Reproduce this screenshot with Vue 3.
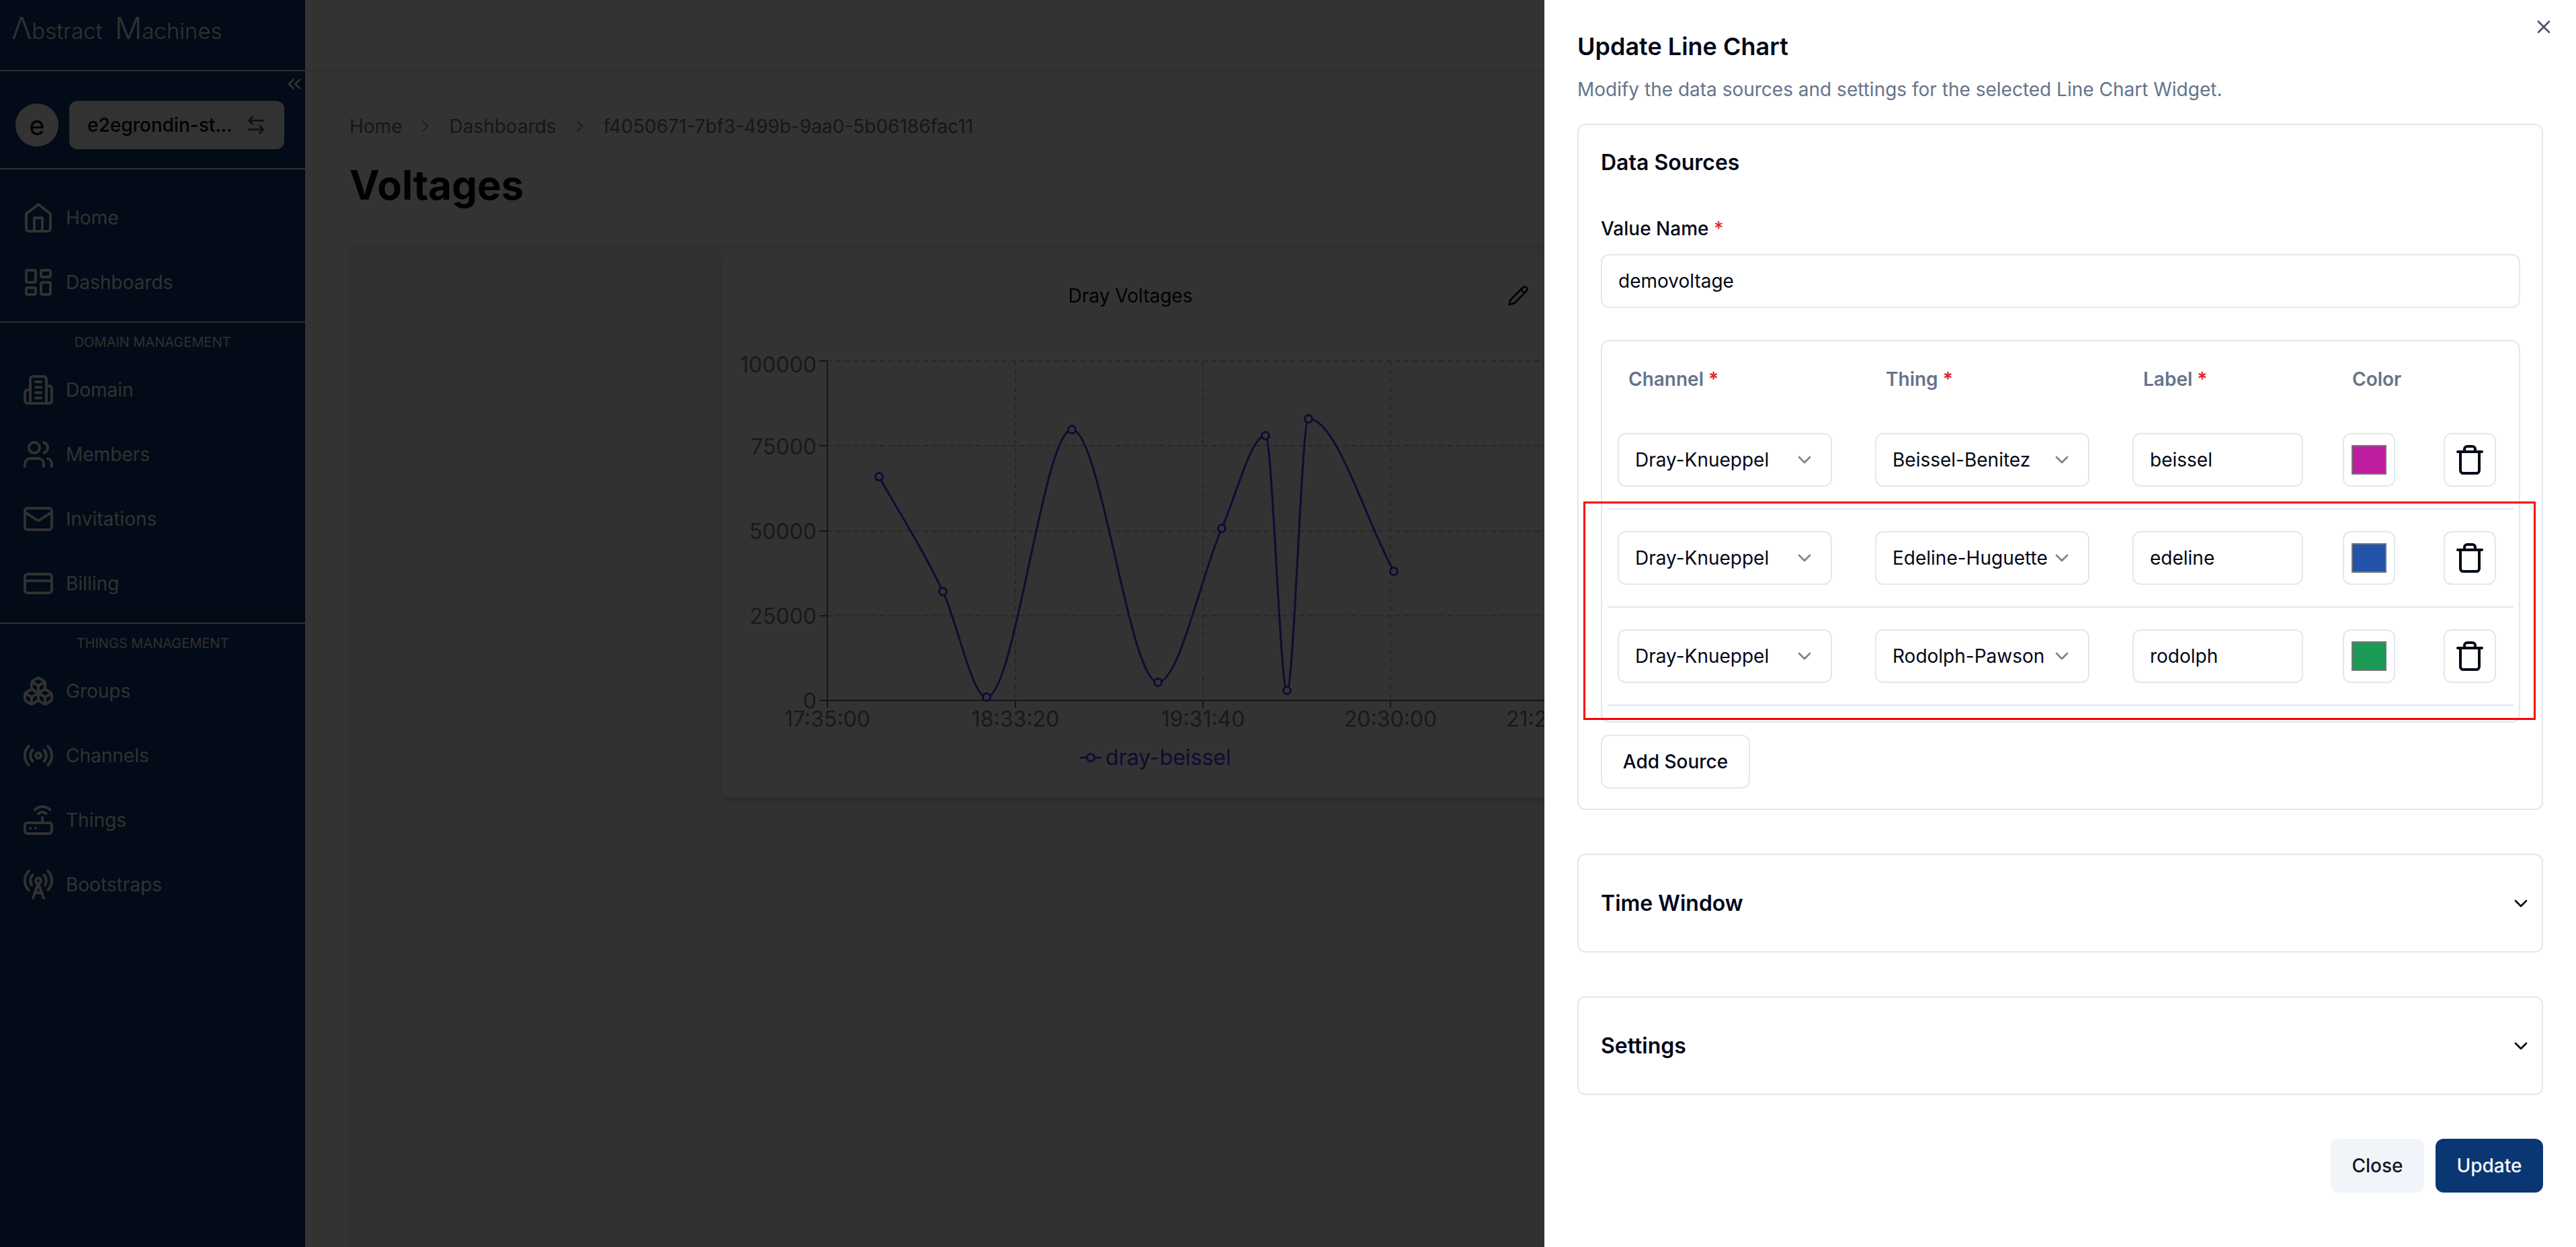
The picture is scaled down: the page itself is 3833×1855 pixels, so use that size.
<template>
  <div class="page">
    <aside class="sidebar">
      <div class="logo"><span class="logo-cap">Λ</span>bstract <span class="logo-cap">M</span>achines</div>
      <button class="collapse" type="button">
        <svg class="ico32" viewBox="0 0 24 24"><path d="m11 17-5-5 5-5" /><path d="m18 17-5-5 5-5" /></svg>
      </button>
      <div class="org">
        <div class="avatar">e</div>
        <div class="org-btn">
          <span>e2egrondin-st...</span>
          <svg class="ico32" viewBox="0 0 24 24"><path d="M8 3 4 7l4 4" /><path d="M4 7h16" /><path d="m16 21 4-4-4-4" /><path d="M20 17H4" /></svg>
        </div>
      </div>
      <section v-for="s in navSections" :key="s.title" class="nav-section">
        <div v-if="s.title !== 'main'" class="nav-title">{{ s.title }}</div>
        <div v-for="item in s.items" :key="item.label" class="nav-item">
          <svg class="ico48" viewBox="0 0 24 24" v-html="item.icon"></svg>
          <span>{{ item.label }}</span>
        </div>
      </section>
    </aside>

    <main class="main">
      <div class="topbar"></div>
      <div class="content">
        <nav class="crumbs">
          <span>Home</span>
          <svg class="ico28" viewBox="0 0 24 24"><path d="m9 18 6-6-6-6" /></svg>
          <span>Dashboards</span>
          <svg class="ico28" viewBox="0 0 24 24"><path d="m9 18 6-6-6-6" /></svg>
          <span>f4050671-7bf3-499b-9aa0-5b06186fac11</span>
        </nav>
        <h1 class="page-title">Voltages</h1>
        <div class="canvas">
          <div class="widget">
            <div class="widget-title">Dray Voltages</div>
            <svg class="pencil" viewBox="0 0 24 24"><path d="M17 3a2.85 2.83 0 1 1 4 4L7.5 20.5 2 22l1.5-5.5Z" /><path d="m15 5 4 4" /></svg>
            <svg class="chart" viewBox="1074 380 1300 806">
              <line v-for="y in yTicks" :key="'g' + y.label" class="grid-line" x1="1231" x2="2320" :y1="y.y" :y2="y.y" />
              <line v-for="x in xTicks" :key="'v' + x.label" class="grid-line" :x1="x.x" :x2="x.x" y1="537" y2="1042" />
              <line class="axis" x1="1231" x2="1231" y1="537" y2="1042" />
              <line class="axis" x1="1231" x2="2320" y1="1042" y2="1042" />
              <line v-for="y in yTicks" :key="'t' + y.label" class="axis" x1="1219" x2="1231" :y1="y.y" :y2="y.y" />
              <line v-for="x in [{ x: 1231 }, ...xTicks]" :key="'u' + x.x" class="axis" :x1="x.x" :x2="x.x" y1="1042" y2="1053" />
              <text v-for="y in yTicks" :key="y.label" class="tick" x="1215" :y="y.textY" text-anchor="end">{{ y.label }}</text>
              <text class="tick" x="1231" y="1081" text-anchor="middle">17:35:00</text>
              <text v-for="x in xTicks" :key="x.label" class="tick" :x="x.x" y="1081" text-anchor="middle">{{ x.label }}</text>
              <text class="tick" x="2241" y="1081">21:28:20</text>
              <path class="series" :d="linePath" />
              <circle v-for="p in points" :key="p[0]" class="dot" :cx="p[0]" :cy="p[1]" r="5.5" />
              <line class="series" x1="1608" x2="1638" y1="1127" y2="1127" />
              <circle class="dot" cx="1623" cy="1127" r="5.5" />
              <text class="legend" x="1645" y="1138">dray-beissel</text>
            </svg>
          </div>
        </div>
      </div>
    </main>

    <div class="overlay"></div>

    <div class="sheet">
      <h2 class="sheet-title">Update Line Chart</h2>
      <p class="sheet-desc">Modify the data sources and settings for the selected Line Chart Widget.</p>
      <svg class="close-x ico32" viewBox="0 0 24 24"><path d="M18 6 6 18" /><path d="m6 6 12 12" /></svg>

      <div class="card sources">
        <h3 class="card-title">Data Sources</h3>
        <label class="field-label">Value Name <em>*</em></label>
        <div class="control value-input">demovoltage</div>

        <div class="table">
          <div class="thead">
            <div>Channel <em>*</em></div>
            <div>Thing <em>*</em></div>
            <div>Label <em>*</em></div>
            <div class="th-color">Color</div>
            <div></div>
          </div>
          <div v-for="r in sources" :key="r.label" class="row">
            <div class="control select">
              <span>{{ r.channel }}</span>
              <svg class="ico32 chev" viewBox="0 0 24 24"><path d="m6 9 6 6 6-6" /></svg>
            </div>
            <div class="control select">
              <span>{{ r.thing }}</span>
              <svg class="ico32 chev" viewBox="0 0 24 24"><path d="m6 9 6 6 6-6" /></svg>
            </div>
            <div class="control label-input">{{ r.label }}</div>
            <div class="control square">
              <div class="swatch" :style="{ background: r.color }"></div>
            </div>
            <div class="control square">
              <svg class="trash" viewBox="0 0 24 24">
                <path d="M3 6h18" />
                <path d="M19 6v14c0 1-1 2-2 2H7c-1 0-2-1-2-2V6" />
                <path d="M8 6V4c0-1 1-2 2-2h4c1 0 2 1 2 2v2" />
              </svg>
            </div>
          </div>
        </div>

        <button class="control add-source" type="button">Add Source</button>
      </div>

      <div v-for="t in ['Time Window', 'Settings']" :key="t" class="card collapsed">
        <h3 class="card-title">{{ t }}</h3>
        <svg class="ico32 dark" viewBox="0 0 24 24"><path d="m6 9 6 6 6-6" /></svg>
      </div>

      <div class="footer">
        <button class="btn btn-close" type="button">Close</button>
        <button class="btn btn-update" type="button">Update</button>
      </div>

      <div class="highlight"></div>
    </div>
  </div>
</template>

<script setup>
import { computed } from 'vue';

const navSections = [
  {
    title: 'main',
    items: [
      { label: 'Home', icon: '<path d="m3 9 9-7 9 7v11a2 2 0 0 1-2 2H5a2 2 0 0 1-2-2z"/><polyline points="9 22 9 12 15 12 15 22"/>' },
      { label: 'Dashboards', icon: '<rect width="7" height="9" x="3" y="3" rx="1"/><rect width="7" height="5" x="14" y="3" rx="1"/><rect width="7" height="9" x="14" y="12" rx="1"/><rect width="7" height="5" x="3" y="16" rx="1"/>' },
    ],
  },
  {
    title: 'DOMAIN MANAGEMENT',
    items: [
      { label: 'Domain', icon: '<path d="M6 22V4a2 2 0 0 1 2-2h8a2 2 0 0 1 2 2v18Z"/><path d="M6 12H4a2 2 0 0 0-2 2v6a2 2 0 0 0 2 2h2"/><path d="M18 9h2a2 2 0 0 1 2 2v9a2 2 0 0 1-2 2h-2"/><path d="M10 6h4"/><path d="M10 10h4"/><path d="M10 14h4"/><path d="M10 18h4"/>' },
      { label: 'Members', icon: '<path d="M16 21v-2a4 4 0 0 0-4-4H6a4 4 0 0 0-4 4v2"/><circle cx="9" cy="7" r="4"/><path d="M22 21v-2a4 4 0 0 0-3-3.87"/><path d="M16 3.13a4 4 0 0 1 0 7.75"/>' },
      { label: 'Invitations', icon: '<rect width="20" height="16" x="2" y="4" rx="2"/><path d="m22 7-8.97 5.7a1.94 1.94 0 0 1-2.06 0L2 7"/>' },
      { label: 'Billing', icon: '<rect width="20" height="14" x="2" y="5" rx="2"/><line x1="2" x2="22" y1="10" y2="10"/>' },
    ],
  },
  {
    title: 'THINGS MANAGEMENT',
    items: [
      { label: 'Groups', icon: '<path d="M2.97 12.92A2 2 0 0 0 2 14.63v3.24a2 2 0 0 0 .97 1.71l3 1.8a2 2 0 0 0 2.06 0L12 19v-5.5l-5-3-4.03 2.42Z"/><path d="m7 16.5-4.74-2.85"/><path d="m7 16.5 5-3"/><path d="M7 16.5v5.17"/><path d="M12 13.5V19l3.97 2.38a2 2 0 0 0 2.06 0l3-1.8a2 2 0 0 0 .97-1.71v-3.24a2 2 0 0 0-.97-1.71L17 10.5l-5 3Z"/><path d="m17 16.5-5-3"/><path d="m17 16.5 4.74-2.85"/><path d="M17 16.5v5.17"/><path d="M7.97 4.42A2 2 0 0 0 7 6.13v4.37l5 3 5-3V6.13a2 2 0 0 0-.97-1.71l-3-1.8a2 2 0 0 0-2.06 0l-3 1.8Z"/><path d="M12 8 7.26 5.15"/><path d="m12 8 4.74-2.85"/><path d="M12 13.5V8"/>' },
      { label: 'Channels', icon: '<path d="M4.9 19.1C1 15.2 1 8.8 4.9 4.9"/><path d="M7.8 16.2c-2.3-2.3-2.3-6.1 0-8.5"/><circle cx="12" cy="12" r="2"/><path d="M16.2 7.8c2.3 2.3 2.3 6.1 0 8.5"/><path d="M19.1 4.9C23 8.8 23 15.1 19.1 19"/>' },
      { label: 'Things', icon: '<rect width="20" height="8" x="2" y="14" rx="2"/><path d="M6.01 18H6"/><path d="M10.01 18H10"/><path d="M15 10v4"/><path d="M17.84 7.17a4 4 0 0 0-5.66 0"/><path d="M20.66 4.34a8 8 0 0 0-11.31 0"/>' },
      { label: 'Bootstraps', icon: '<path d="M4.9 16.1C1 12.2 1 5.8 4.9 1.9"/><path d="M7.8 4.7a6.14 6.14 0 0 0-.8 7.5"/><circle cx="12" cy="9" r="2"/><path d="M16.2 4.8c2 2 2.26 5.11.8 7.47"/><path d="M19.1 1.9a9.96 9.96 0 0 1 0 14.1"/><path d="M9.5 18h5"/><path d="m8 22 4-11 4 11"/>' },
    ],
  },
];

const sources = [
  { channel: 'Dray-Knueppel', thing: 'Beissel-Benitez', label: 'beissel', color: '#c01ea0' },
  { channel: 'Dray-Knueppel', thing: 'Edeline-Huguette', label: 'edeline', color: '#2453ab' },
  { channel: 'Dray-Knueppel', thing: 'Rodolph-Pawson', label: 'rodolph', color: '#1b9a56' },
];

const yTicks = [
  { label: '100000', y: 537, textY: 554 },
  { label: '75000', y: 663, textY: 676 },
  { label: '50000', y: 790, textY: 802 },
  { label: '25000', y: 916, textY: 928 },
  { label: '0', y: 1042, textY: 1054 },
];

const xTicks = [
  { label: '18:33:20', x: 1511 },
  { label: '19:31:40', x: 1790 },
  { label: '20:30:00', x: 2069 },
];

const points = [
  [1308, 709], [1403, 880], [1468, 1037], [1595, 639], [1723, 1015],
  [1818, 786], [1883, 648], [1915, 1027], [1947, 623], [2074, 850],
];

// monotone cubic, so the curve doesn't overshoot between samples
const linePath = computed(() => {
  const n = points.length;
  const d = [];
  for (let i = 0; i < n - 1; i++) {
    d.push((points[i + 1][1] - points[i][1]) / (points[i + 1][0] - points[i][0]));
  }
  const m = [d[0]];
  for (let i = 1; i < n - 1; i++) {
    m.push(d[i - 1] * d[i] <= 0 ? 0 : (d[i - 1] + d[i]) / 2);
  }
  m.push(d[n - 2]);
  for (let i = 0; i < n - 1; i++) {
    if (d[i] === 0) continue;
    const a = m[i] / d[i];
    const b = m[i + 1] / d[i];
    const s = a * a + b * b;
    if (s > 9) {
      const t = 3 / Math.sqrt(s);
      m[i] = t * a * d[i];
      m[i + 1] = t * b * d[i];
    }
  }
  let out = `M${points[0][0]} ${points[0][1]}`;
  for (let i = 0; i < n - 1; i++) {
    const [x0, y0] = points[i];
    const [x1, y1] = points[i + 1];
    const h = (x1 - x0) / 3;
    out += ` C${x0 + h} ${y0 + m[i] * h} ${x1 - h} ${y1 - m[i + 1] * h} ${x1} ${y1}`;
  }
  return out;
});
</script>

<style scoped>
.page {
  position: relative;
  display: flex;
  width: 3833px;
  height: 1855px;
  overflow: hidden;
  background: #fff;
  font-family: Inter, "Liberation Sans", sans-serif;
  font-size: 28px;
  color: #020817;
}

svg {
  fill: none;
  stroke: currentColor;
  stroke-width: 2;
  stroke-linecap: round;
  stroke-linejoin: round;
  flex: none;
}
.ico32 { width: 32px; height: 32px; }
.ico48 { width: 48px; height: 48px; }
.ico28 { width: 28px; height: 28px; stroke-width: 1.5; }

/* sidebar */
.sidebar {
  position: relative;
  flex: none;
  width: 454px;
  background: #0a3773;
  color: #f5f5f5;
}
.logo {
  height: 106px;
  padding: 15px 0 0 17px;
  box-sizing: border-box;
  border-bottom: 2px solid #f0f0f0;
  font-size: 33px;
  font-weight: 300;
  line-height: 54px;
  word-spacing: 9px;
  white-space: nowrap;
}
.logo-cap {
  font-size: 45px;
}
.collapse {
  position: absolute;
  left: 422px;
  top: 109px;
  padding: 0;
  border: 0;
  background: none;
  color: #fff;
}
.org {
  display: flex;
  align-items: center;
  gap: 16px;
  height: 146px;
  padding: 44px 31px 28px 23px;
  box-sizing: border-box;
  border-bottom: 2px solid #f0f0f0;
}
.avatar {
  display: flex;
  flex: none;
  align-items: center;
  justify-content: center;
  width: 64px;
  height: 64px;
  border-radius: 50%;
  background: #fff;
  color: #020817;
  font-size: 40px;
}
.org-btn {
  display: flex;
  flex: 1;
  align-items: center;
  justify-content: space-between;
  height: 72px;
  padding: 0 26px 0 27px;
  box-sizing: border-box;
  border-radius: 12px;
  background: #f8f8f8;
  color: #020817;
  font-weight: 500;
  white-space: nowrap;
}
.org-btn svg { color: #555; }
.nav-section {
  padding-bottom: 10px;
  border-bottom: 2px solid #f0f0f0;
}
.nav-section:first-of-type {
  padding-top: 24px;
}
.nav-section:last-of-type {
  border-bottom: 0;
}
.nav-title {
  height: 30px;
  margin: 14px 0 8px;
  font-size: 20px;
  line-height: 30px;
  text-align: center;
  color: #e8e8e8;
}
.nav-item {
  display: flex;
  align-items: center;
  gap: 17px;
  height: 96px;
  padding-left: 33px;
}

/* dimmed page */
.main {
  display: flex;
  flex: 1;
  flex-direction: column;
  min-width: 0;
}
.topbar {
  flex: none;
  height: 106px;
  box-sizing: border-box;
  border-bottom: 2px solid #e2e8f0;
}
.content {
  display: flex;
  flex: 1;
  flex-direction: column;
  padding: 62px 0 0 66px;
}
.crumbs {
  display: flex;
  align-items: center;
  gap: 21px;
  height: 40px;
  color: #64748b;
  white-space: nowrap;
}
.page-title {
  margin: 31px 0 0;
  font-size: 60px;
  font-weight: 700;
  line-height: 72px;
  color: #020817;
}
.canvas {
  position: relative;
  flex: 1;
  margin-top: 51px;
  background-color: #f5f5f5;
  background-image:
    repeating-linear-gradient(90deg, #f0f5fa 0 18px, transparent 18px 267px),
    repeating-linear-gradient(180deg, #f0f5fa 0 18px, transparent 18px 140px);
}
.widget {
  position: absolute;
  left: 554px;
  top: 18px;
  width: 1240px;
  height: 806px;
  background: #fff;
  box-shadow: 0 8px 12px -2px rgba(0, 0, 0, 0.1), 0 4px 8px -4px rgba(0, 0, 0, 0.1);
}
.widget-title {
  height: 120px;
  padding-right: 24px;
  line-height: 120px;
  text-align: center;
}
.pencil {
  position: absolute;
  right: 39px;
  top: 44px;
  width: 32px;
  height: 32px;
}
.chart {
  position: absolute;
  left: 0;
  top: 0;
  width: 1300px;
  height: 806px;
  overflow: visible;
}
.grid-line {
  stroke: #c4c4c4;
  stroke-width: 2;
  stroke-dasharray: 7 6;
  stroke-linecap: butt;
}
.axis {
  stroke: #707070;
  stroke-width: 2;
  stroke-linecap: butt;
}
.tick {
  fill: #7d7d7d;
  stroke: none;
  font-size: 32px;
}
.legend {
  fill: #642dff;
  stroke: none;
  font-size: 32px;
}
.series {
  stroke: #642dff;
  stroke-width: 3;
}
.dot {
  fill: #fff;
  stroke: #642dff;
  stroke-width: 3;
}

.overlay {
  position: absolute;
  inset: 0;
  background: rgba(0, 0, 0, 0.8);
}

/* sheet */
.sheet {
  position: absolute;
  top: 0;
  right: 0;
  bottom: 0;
  display: flex;
  flex-direction: column;
  width: 1535px;
  padding: 51px 49px 0;
  box-sizing: border-box;
  background: #fff;
}
.sheet-title {
  margin: 0;
  font-size: 36px;
  font-weight: 600;
  line-height: 36px;
}
.sheet-desc {
  margin: 26px 0 31px;
  line-height: 40px;
  color: #64748b;
}
.close-x {
  position: absolute;
  right: 32px;
  top: 24px;
  color: #4a5568;
}
.card {
  border: 2px solid #e2e8f0;
  border-radius: 12px;
}
.sources {
  padding: 32px 32px 30px 33px;
}
.card-title {
  margin: 0;
  font-size: 32px;
  font-weight: 600;
  line-height: 48px;
}
.field-label {
  display: block;
  margin: 54px 0 18px;
  font-weight: 500;
  line-height: 40px;
}
em {
  font-style: normal;
  color: #dc2626;
}
.control {
  display: flex;
  align-items: center;
  height: 80px;
  box-sizing: border-box;
  border: 2px solid #e2e8f0;
  border-radius: 12px;
  background: #fff;
  font-family: inherit;
  font-size: 28px;
  color: inherit;
}
.value-input {
  padding-left: 24px;
}
.table {
  margin-top: 48px;
  padding: 8px 8px 23px;
  border: 2px solid #e2e8f0;
  border-radius: 12px;
}
.thead,
.row {
  display: grid;
  grid-template-columns: 383px 383px 313px 150px 78px;
  padding-left: 15px;
}
.thead {
  align-items: center;
  height: 96px;
  font-weight: 600;
  color: #64748b;
}
.thead > div {
  padding-left: 16px;
}
.thead > .th-color {
  padding-left: 14px;
}
.row {
  align-items: center;
  height: 146px;
  box-sizing: border-box;
  border-bottom: 2px solid #e2e8f0;
}
.select {
  justify-content: space-between;
  width: 319px;
  padding: 0 23px 0 24px;
  white-space: nowrap;
}
.chev {
  opacity: 0.5;
}
.label-input {
  width: 254px;
  padding-left: 24px;
}
.square {
  justify-content: center;
  width: 78px;
}
.swatch {
  width: 52px;
  height: 44px;
  box-sizing: border-box;
  border: 2px solid #767676;
}
.trash {
  width: 48px;
  height: 48px;
}
.add-source {
  justify-content: center;
  width: 222px;
  margin-top: 18px;
  font-weight: 500;
}
.collapsed {
  display: flex;
  align-items: center;
  justify-content: space-between;
  height: 147px;
  box-sizing: border-box;
  margin-top: 65px;
  padding: 0 15px 0 33px;
}
.footer {
  display: flex;
  justify-content: flex-end;
  gap: 17px;
  margin-top: 65px;
}
.btn {
  height: 80px;
  border: 0;
  border-radius: 12px;
  font-family: inherit;
  font-size: 28px;
  font-weight: 500;
}
.btn-close {
  width: 139px;
  background: #f1f5f9;
  color: #0f172a;
}
.btn-update {
  width: 160px;
  background: #0a3773;
  color: #f8fafc;
}
.highlight {
  position: absolute;
  left: 58px;
  top: 746px;
  width: 1417px;
  height: 325px;
  box-sizing: border-box;
  border: 3px solid #f00;
  pointer-events: none;
}
</style>
